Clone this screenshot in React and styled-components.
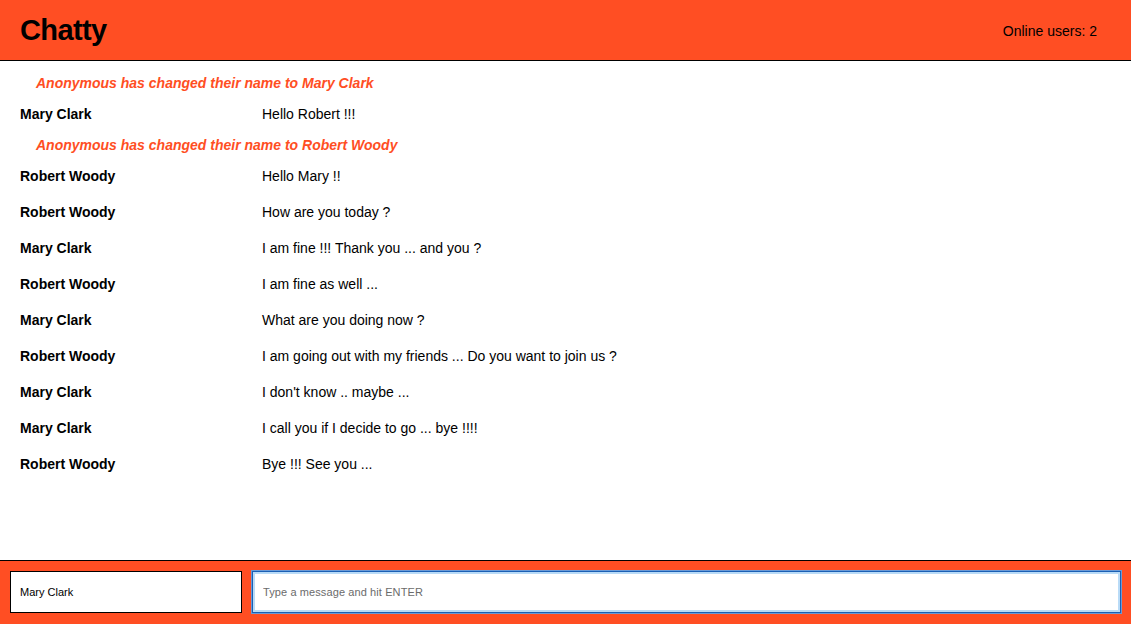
import React from "react";
import styled, { createGlobalStyle } from "styled-components";

const ORANGE = "#ff4e23";

const Global = createGlobalStyle`
  html, body { margin: 0; padding: 0; height: 100%; background: #fff; }
  body { font-family: "Liberation Sans", Arial, sans-serif; color: #000; }
  #root { height: 100%; }
  * { box-sizing: border-box; }
`;

const Page = styled.div`
  height: 624px;
  display: flex;
  flex-direction: column;
  overflow: hidden;
`;

const NavBar = styled.header`
  height: 61px;
  flex: none;
  background: ${ORANGE};
  border-bottom: 1px solid #000;
  display: flex;
  align-items: center;
  justify-content: space-between;
  padding: 1px 34px 0 20px;
`;

const Brand = styled.h1`
  margin: 0;
  font-size: 29px;
  font-weight: 700;
  line-height: 1;
  letter-spacing: -0.6px;
`;

const Online = styled.span`
  font-size: 14px;
`;

const MessageList = styled.main`
  flex: 1;
  padding-top: 9px;
`;

const SystemRow = styled.div`
  height: 26px;
  display: flex;
  align-items: center;
  padding-left: 36px;
  color: ${ORANGE};
  font-style: italic;
  font-weight: 700;
  font-size: 14px;
`;

const MessageRow = styled.div`
  height: 36px;
  display: flex;
  align-items: center;
  padding-left: 20px;
  font-size: 14px;
`;

const Username = styled.span`
  width: 242px;
  flex: none;
  font-weight: 700;
`;

const Content = styled.span``;

const ChatBar = styled.footer`
  height: 64px;
  flex: none;
  background: ${ORANGE};
  border-top: 1px solid #000;
  display: flex;
  align-items: center;
  gap: 10px;
  padding: 0 10px 1px;
`;

const NameInput = styled.input`
  width: 232px;
  height: 42px;
  border: 1px solid #000;
  padding: 0 9px;
  font-family: "Liberation Sans", Arial, sans-serif;
  font-size: 11px;
  color: #000;
  background: #fff;
  outline: none;
`;

const MessageInput = styled.input`
  flex: 1;
  height: 42px;
  border: 1px solid #1a5fb4;
  box-shadow: inset 0 0 0 2px #b9dbf7, 0 0 0 1px #6a9ad6;
  padding: 0 10px;
  font-family: "Liberation Sans", Arial, sans-serif;
  font-size: 11px;
  letter-spacing: 0.1px;
  background: #fff;
  outline: none;
  &::placeholder { color: #6b6b6b; }
`;

const items = [
  { type: "sys", text: "Anonymous has changed their name to Mary Clark" },
  { type: "msg", user: "Mary Clark", text: "Hello Robert !!!" },
  { type: "sys", text: "Anonymous has changed their name to Robert Woody" },
  { type: "msg", user: "Robert Woody", text: "Hello Mary !!" },
  { type: "msg", user: "Robert Woody", text: "How are you today ?" },
  { type: "msg", user: "Mary Clark", text: "I am fine !!! Thank you ... and you ?" },
  { type: "msg", user: "Robert Woody", text: "I am fine as well ..." },
  { type: "msg", user: "Mary Clark", text: "What are you doing now ?" },
  { type: "msg", user: "Robert Woody", text: "I am going out with my friends ... Do you want to join us ?" },
  { type: "msg", user: "Mary Clark", text: "I don't know .. maybe ..." },
  { type: "msg", user: "Mary Clark", text: "I call you if I decide to go ... bye !!!!" },
  { type: "msg", user: "Robert Woody", text: "Bye !!! See you ..." },
];

export default function App() {
  return (
    <Page>
      <Global />
      <NavBar>
        <Brand>Chatty</Brand>
        <Online>Online users: 2</Online>
      </NavBar>
      <MessageList>
        {items.map((m, i) =>
          m.type === "sys" ? (
            <SystemRow key={i}>{m.text}</SystemRow>
          ) : (
            <MessageRow key={i}>
              <Username>{m.user}</Username>
              <Content>{m.text}</Content>
            </MessageRow>
          )
        )}
      </MessageList>
      <ChatBar>
        <NameInput defaultValue="Mary Clark" />
        <MessageInput placeholder="Type a message and hit ENTER" />
      </ChatBar>
    </Page>
  );
}
